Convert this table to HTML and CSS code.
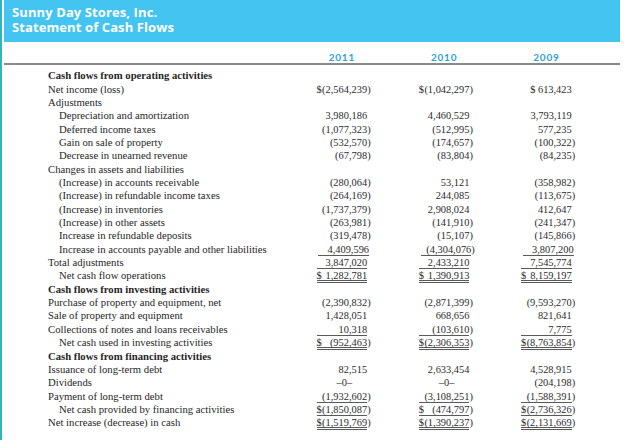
FILE: index.html
```html
<!DOCTYPE html>
<html>
<head>
<meta charset="utf-8">
<link rel="stylesheet" href="styles.css">
</head>
<body>
<div class="page">
  <header class="banner">
    <div>Sunny Day Stores, Inc.</div>
    <div>Statement of Cash Flows</div>
  </header>
  <div class="grid years">
    <span></span><span class="yr">2011</span><span class="yr">2010</span><span class="yr">2009</span>
  </div>
  <div class="rule"></div>
  <div class="rows">
    <div class="grid row"><span class="lbl b">Cash flows from operating activities</span><span></span><span></span><span></span></div>
    <div class="grid row"><span class="lbl">Net income (loss)</span><span class="v"><span>$</span><span>(2,564,239<span class="p">)</span></span></span><span class="v"><span>$</span><span>(1,042,297<span class="p">)</span></span></span><span class="v"><span></span><span>$ 613,423</span></span></div>
    <div class="grid row"><span class="lbl">Adjustments</span><span></span><span></span><span></span></div>
    <div class="grid row"><span class="lbl i1">Depreciation and amortization</span><span class="v"><span></span><span>3,980,186</span></span><span class="v"><span></span><span>4,460,529</span></span><span class="v"><span></span><span>3,793,119</span></span></div>
    <div class="grid row"><span class="lbl i1">Deferred income taxes</span><span class="v"><span></span><span>(1,077,323<span class="p">)</span></span></span><span class="v"><span></span><span>(512,995<span class="p">)</span></span></span><span class="v"><span></span><span>577,235</span></span></div>
    <div class="grid row"><span class="lbl i1">Gain on sale of property</span><span class="v"><span></span><span>(532,570<span class="p">)</span></span></span><span class="v"><span></span><span>(174,657<span class="p">)</span></span></span><span class="v"><span></span><span>(100,322<span class="p">)</span></span></span></div>
    <div class="grid row"><span class="lbl i1">Decrease in unearned revenue</span><span class="v"><span></span><span>(67,798<span class="p">)</span></span></span><span class="v"><span></span><span>(83,804<span class="p">)</span></span></span><span class="v"><span></span><span>(84,235<span class="p">)</span></span></span></div>
    <div class="grid row"><span class="lbl">Changes in assets and liabilities</span><span></span><span></span><span></span></div>
    <div class="grid row"><span class="lbl i1">(Increase) in accounts receivable</span><span class="v"><span></span><span>(280,064<span class="p">)</span></span></span><span class="v"><span></span><span>53,121</span></span><span class="v"><span></span><span>(358,982<span class="p">)</span></span></span></div>
    <div class="grid row"><span class="lbl i1">(Increase) in refundable income taxes</span><span class="v"><span></span><span>(264,169<span class="p">)</span></span></span><span class="v"><span></span><span>244,085</span></span><span class="v"><span></span><span>(113,675<span class="p">)</span></span></span></div>
    <div class="grid row"><span class="lbl i1">(Increase) in inventories</span><span class="v"><span></span><span>(1,737,379<span class="p">)</span></span></span><span class="v"><span></span><span>2,908,024</span></span><span class="v"><span></span><span>412,647</span></span></div>
    <div class="grid row"><span class="lbl i1">(Increase) in other assets</span><span class="v"><span></span><span>(263,981<span class="p">)</span></span></span><span class="v"><span></span><span>(141,910<span class="p">)</span></span></span><span class="v"><span></span><span>(241,347<span class="p">)</span></span></span></div>
    <div class="grid row"><span class="lbl i1">Increase in refundable deposits</span><span class="v"><span></span><span>(319,478<span class="p">)</span></span></span><span class="v"><span></span><span>(15,107<span class="p">)</span></span></span><span class="v"><span></span><span>(145,866<span class="p">)</span></span></span></div>
    <div class="grid row"><span class="lbl i1">Increase in accounts payable and other liabilities</span><span class="v u1"><span></span><span>4,409,596</span></span><span class="v u1"><span></span><span>(4,304,076<span class="p">)</span></span></span><span class="v u1"><span></span><span>3,807,200</span></span></div>
    <div class="grid row"><span class="lbl">Total adjustments</span><span class="v u1"><span></span><span>3,847,020</span></span><span class="v u1"><span></span><span>2,433,210</span></span><span class="v u1"><span></span><span>7,545,774</span></span></div>
    <div class="grid row"><span class="lbl i1">Net cash flow operations</span><span class="v u2"><span>$</span><span>1,282,781</span></span><span class="v u2"><span>$</span><span>1,390,913</span></span><span class="v u2"><span>$</span><span>8,159,197</span></span></div>
    <div class="grid row"><span class="lbl b">Cash flows from investing activities</span><span></span><span></span><span></span></div>
    <div class="grid row"><span class="lbl">Purchase of property and equipment, net</span><span class="v"><span></span><span>(2,390,832<span class="p">)</span></span></span><span class="v"><span></span><span>(2,871,399<span class="p">)</span></span></span><span class="v"><span></span><span>(9,593,270<span class="p">)</span></span></span></div>
    <div class="grid row"><span class="lbl">Sale of property and equipment</span><span class="v"><span></span><span>1,428,051</span></span><span class="v"><span></span><span>668,656</span></span><span class="v"><span></span><span>821,641</span></span></div>
    <div class="grid row"><span class="lbl">Collections of notes and loans receivables</span><span class="v u1"><span></span><span>10,318</span></span><span class="v u1"><span></span><span>(103,610<span class="p">)</span></span></span><span class="v u1"><span></span><span>7,775</span></span></div>
    <div class="grid row"><span class="lbl i1">Net cash used in investing activities</span><span class="v u2"><span>$</span><span>(952,463<span class="p">)</span></span></span><span class="v u2"><span>$</span><span>(2,306,353<span class="p">)</span></span></span><span class="v u2"><span>$</span><span>(8,763,854<span class="p">)</span></span></span></div>
    <div class="grid row"><span class="lbl b">Cash flows from financing activities</span><span></span><span></span><span></span></div>
    <div class="grid row"><span class="lbl">Issuance of long-term debt</span><span class="v"><span></span><span>82,515</span></span><span class="v"><span></span><span>2,633,454</span></span><span class="v"><span></span><span>4,528,915</span></span></div>
    <div class="grid row"><span class="lbl">Dividends</span><span class="v"><span></span><span class="nil">–0–</span></span><span class="v"><span></span><span class="nil">–0–</span></span><span class="v"><span></span><span>(204,198<span class="p">)</span></span></span></div>
    <div class="grid row"><span class="lbl">Payment of long-term debt</span><span class="v u1"><span></span><span>(1,932,602<span class="p">)</span></span></span><span class="v u1"><span></span><span>(3,108,251<span class="p">)</span></span></span><span class="v u1"><span></span><span>(1,588,391<span class="p">)</span></span></span></div>
    <div class="grid row"><span class="lbl i1">Net cash provided by financing activities</span><span class="v u1"><span>$</span><span>(1,850,087<span class="p">)</span></span></span><span class="v u1"><span>$</span><span>(474,797<span class="p">)</span></span></span><span class="v u1"><span>$</span><span>(2,736,326<span class="p">)</span></span></span></div>
    <div class="grid row"><span class="lbl">Net increase (decrease) in cash</span><span class="v u2"><span>$</span><span>(1,519,769<span class="p">)</span></span></span><span class="v u2"><span>$</span><span>(1,390,237<span class="p">)</span></span></span><span class="v u2"><span>$</span><span>(2,131,669<span class="p">)</span></span></span></div>
  </div>
</div>
</body>
</html>
```

FILE: styles.css
```css
html, body {
  margin: 0;
  padding: 0;
  background: #ffffff;
}

.page {
  width: 620px;
  min-height: 440px;
  box-sizing: border-box;
  border-left: 2px solid #2fb4c2;
  padding-left: 2px;
}

.banner {
  height: 42px;
  box-sizing: border-box;
  background: #44c4f1;
  color: #ffffff;
  font-family: "Open Sans", Lato, sans-serif;
  font-weight: 700;
  font-size: 13px;
  line-height: 15px;
  letter-spacing: 0.1px;
  padding: 5px 0 0 8px;
}

.grid {
  display: grid;
  grid-template-columns: 1fr 50.6px 50.6px 50.6px;
  column-gap: 51.7px;
  padding: 0 48.3px 0 44px;
}

.years {
  padding-top: 9px;
  height: 12px;
}

.yr {
  text-align: center;
  font-family: Lato, "Open Sans", sans-serif;
  font-weight: 700;
  font-size: 10px;
  line-height: 12px;
  color: #2e9fd8;
  letter-spacing: 0.8px;
}

.rule {
  height: 2px;
  background: #8a8a8a;
}

.rows {
  padding-top: 4.3px;
}

.row {
  height: 13.35px;
  line-height: 13.35px;
}

.lbl {
  font-family: "Liberation Serif", "Times New Roman", serif;
  font-size: 10.7px;
  color: #262626;
  white-space: nowrap;
}

.lbl.b {
  font-weight: 700;
}

.lbl.i1 {
  padding-left: 11px;
}

.v {
  display: flex;
  justify-content: space-between;
  height: 13.35px;
  box-sizing: border-box;
  font-family: "Liberation Serif", "Times New Roman", serif;
  font-size: 10.4px;
  color: #2b2b2b;
  white-space: nowrap;
}

.v > span:last-child {
  text-align: right;
}

.p {
  margin-right: -0.333em;
}

.nil {
  margin-right: 15px;
}

.u1 {
  border-bottom: 1px solid #5a5a5a;
}

.u2 {
  border-bottom: 3px double #5a5a5a;
}
```
